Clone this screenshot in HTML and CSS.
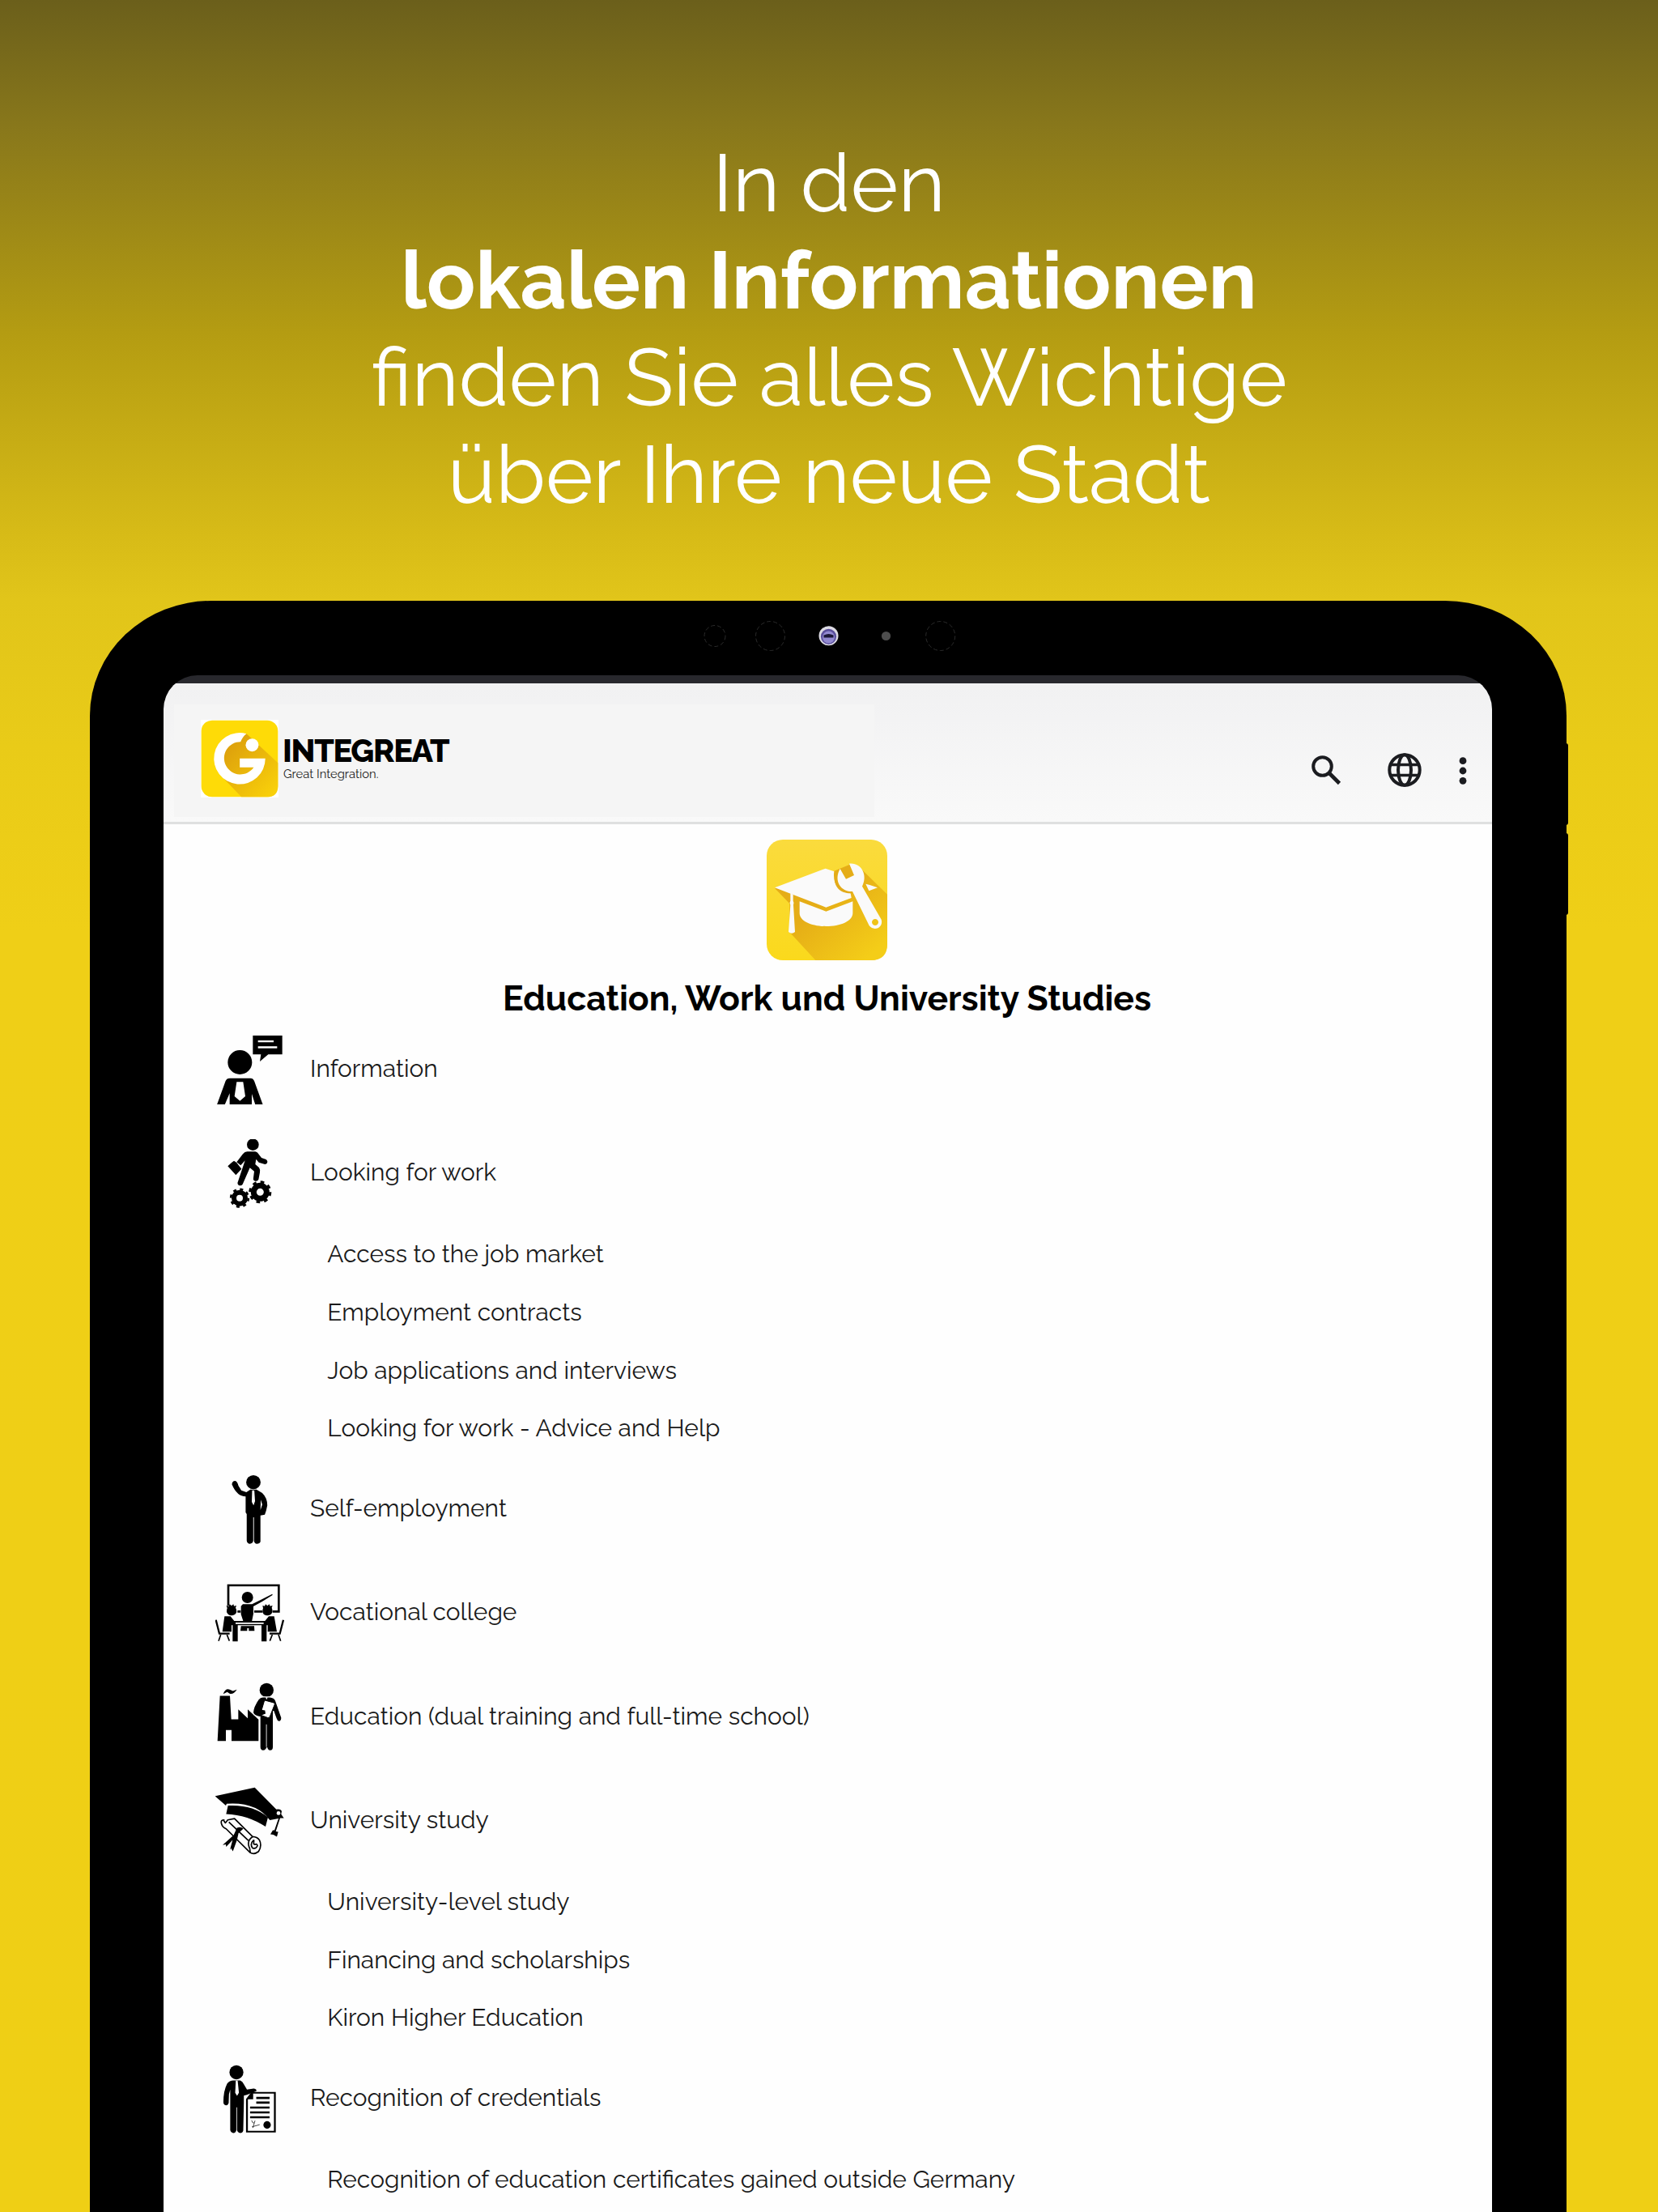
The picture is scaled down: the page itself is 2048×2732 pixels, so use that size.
FILE: index.html
```html
<!DOCTYPE html>
<html lang="de">
<head>
<meta charset="utf-8">
<title>Integreat</title>
<link rel="stylesheet" href="styles.css">
</head>
<body>
<main class="page">
  <h1 class="hero">
    <span class="hero-line">In den</span>
    <strong class="hero-line hero-strong">lokalen Informationen</strong>
    <span class="hero-line">finden Sie alles Wichtige</span>
    <span class="hero-line">über Ihre neue Stadt</span>
  </h1>

  <section class="tablet">
    <svg class="sensors" viewBox="860 760 330 50" fill="none">
      <circle cx="883" cy="785.5" r="13" stroke="#2b2b2b" stroke-dasharray="5 3"/>
      <circle cx="951.5" cy="785.5" r="18" stroke="#2b2b2b" stroke-dasharray="5 3"/>
      <circle cx="1023.5" cy="785.3" r="12" fill="#dddbe4"/>
      <circle cx="1023.5" cy="786.3" r="9.6" fill="#5a4f9c"/>
      <circle cx="1023.5" cy="787" r="7.5" fill="#9289d0"/>
      <path d="M1017.5 787.5v-3q6-3 12 0v3z" fill="#1c1838"/>
      <circle cx="1094.5" cy="785.5" r="5.6" fill="#4d4d4d"/>
      <circle cx="1161.7" cy="785.5" r="18" stroke="#2b2b2b" stroke-dasharray="5 3"/>
    </svg>
    <span class="side-button side-button-up"></span>
    <span class="side-button side-button-down"></span>

    <div class="screen">
      <header class="app-bar">
        <div class="brand">
          <svg class="brand-logo" viewBox="24 27 289 289">
            <defs>
              <linearGradient id="logoShade" x1="0" y1="0" x2="1" y2="1">
                <stop offset="0.2" stop-color="#dea20c"/><stop offset="1" stop-color="#fbd40a"/>
              </linearGradient>
            </defs>
            <path fill="#fff" d="M24 27h289v289H24z"/>
            <rect x="26" y="29" width="285" height="285" rx="40" fill="#fedb07"/>
            <path fill="url(#logoShade)" d="M194 79L311 187V274Q311 314 271 314H175L102 238 90 160 130 100z"/>
            <path fill="#fff" d="M194 79A95.5 95.5 0 1 0 264 171H169V204H221A60.5 60.5 0 1 1 172 109Q180 89 194 79z"/>
            <circle cx="215" cy="121" r="24" fill="#fff"/>
          </svg>
          <div class="brand-text">
            <span class="brand-name">INTEGREAT</span>
            <span class="brand-tag">Great Integration.</span>
          </div>
        </div>
        <nav class="actions">
          <svg class="icon-search" viewBox="0 0 37 37" fill="none" stroke="#1b1c20"><circle cx="13.5" cy="13.5" r="11.3" stroke-width="4"/><path d="M22 22L34.5 34.5" stroke-width="4.6"/></svg>
          <svg class="icon-globe" viewBox="0 0 42 42" fill="none" stroke="#1b1c20" stroke-width="4"><circle cx="21" cy="21" r="18.7"/><ellipse cx="21" cy="21" rx="8" ry="18.7"/><path d="M4 14.500H38M4 27.500H38" stroke-width="3.6"/></svg>
          <svg class="icon-more" viewBox="0 0 10 34" fill="#1b1c20"><circle cx="5" cy="4.7" r="4.4"/><circle cx="5" cy="17" r="4.4"/><circle cx="5" cy="29.3" r="4.4"/></svg>
        </nav>
      </header>

      <div class="content">
        <svg class="category-icon" viewBox="22 20 447 447">
          <defs>
            <linearGradient id="tile" x1="0" y1="0" x2="0" y2="1"><stop offset="0" stop-color="#fadb3d"/><stop offset="1" stop-color="#fad91c"/></linearGradient>
            <linearGradient id="shade" x1="0" y1="0" x2="1" y2="1"><stop offset="0.4" stop-color="#e5ad17"/><stop offset="0.9" stop-color="#f4cd18"/></linearGradient>
          </defs>
          <rect x="22" y="20" width="447" height="447" rx="60" fill="url(#tile)"/>
          <path fill="url(#shade)" d="M52 200L107 257V363L203 467H409Q469 467 469 407V223L374 130 330 112 240 150z"/>
          <path fill="#fafafa" d="M52 198L240 127 272 138C266 180 285 215 333 219L336 236 242 271z"/>
          <path fill="#fafafa" d="M144 249L242 286 341 249V292C341 322 295 341 242 341S144 322 144 292zM389 184L404 188 433 198 401 210z"/>
          <path fill="#fafafa" d="M110 219L120 223V247Q125 255 121 262L127 362Q115 372 103 362L110 262Q105 254 110 247z"/>
          <path fill="#e3ab1a" d="M281 140C265 165 273 222 340 219L338 211C300 213 281 190 281 140z"/>
          <path fill="#fafafa" fill-rule="evenodd" d="M294 128L316 166 346 152 328 109C372 104 398 150 376 193L447 316C456 345 420 362 402 339L340 212C300 215 268 175 294 128zM424 314a12 12 0 1 0 .1 0z"/>
        </svg>
        <h2 class="category-title">Education, Work und University Studies</h2>

        <ul class="menu">
          <li class="item">
            <svg class="item-icon" viewBox="78 58 255 255">
              <circle cx="169" cy="157" r="45"/>
              <path d="M217 57H326V128H274L243 154 247 128H217z"/>
              <path d="M132 216H208Q218 216 222 226L254 314H226L213 274V314H131V272L113 314H84L116 226Q120 216 132 216z"/>
              <path fill="#fff" d="M157 230H181L189 283 169 300 149 283zM236 76h58v7h-58zM236 98h71v7h-71z"/>
            </svg>
            <span class="item-label">Information</span>
          </li>
          <li class="item">
            <svg class="item-icon" viewBox="78 443 255 255">
              <circle cx="217" cy="463" r="22"/>
              <path d="M124 543L138 530 147 523 157 530 175 553 154 576z"/>
              <path d="M196 489H226Q234 490 238 498L249 512 266 518Q275 525 268 534L262 536 239 529 229 517 226 536 240 548Q245 556 243 566L238 592Q234 600 226 598 217 596 219 586L222 562 206 549 179 610Q173 618 164 613 158 608 162 600L188 522 172 540 157 528 180 498Q187 489 196 489z"/>
              <g fill="none" stroke="#000">
                <circle cx="168" cy="661" r="21" stroke-width="18"/>
                <circle cx="168" cy="661" r="32.5" stroke-width="8" stroke-dasharray="12 13.520"/>
                <circle cx="244" cy="639" r="24" stroke-width="21"/>
                <circle cx="244" cy="639" r="37.5" stroke-width="9" stroke-dasharray="14 15.450"/>
              </g>
            </svg>
            <span class="item-label">Looking for work</span>
          </li>
          <li class="subitem">Access to the job market</li>
          <li class="subitem">Employment contracts</li>
          <li class="subitem">Job applications and interviews</li>
          <li class="subitem">Looking for work - Advice and Help</li>
          <li class="item">
            <svg class="item-icon" viewBox="58.2 966 190.4 255" preserveAspectRatio="none">
              <ellipse cx="163.5" cy="992" rx="20" ry="26"/>
              <path d="M104 1000Q105 987 113 987 119 989 122 1005L130 1022 144 1029 155 1019H172L188 1032Q202 1050 202 1078 199 1100 195 1112L183 1115V1212Q181 1220 173 1220 166 1219 165 1208V1122H163V1210Q161 1220 154 1220 146 1219 145 1208V1110L142 1104V1045Q118 1045 104 1000z"/>
              <path fill="#fff" d="M160 1022H166L168 1062 164 1078 159 1065zM184 1057L188 1075 183 1095z"/>
            </svg>
            <span class="item-label">Self-employment</span>
          </li>
          <li class="item">
            <svg class="item-icon" viewBox="78 61 255 255">
              <path fill="none" stroke="#000" stroke-width="8" d="M126 160V85H313V182H290M252 182H222M172 182H160"/>
              <circle cx="197" cy="130" r="21"/>
              <path d="M180 155H214L246 139 289 117 290 121 253 144 219 163V190L213 220H182L173 192V162z"/>
              <path d="M173 236H222L223 254H202V244H196V254H171z"/>
              <path d="M119 160L128 162 131 155 138 161 145 155 147 162 156 160 153 168Q162 184 149 194 137 200 126 193 116 184 122 170zM253 160L261 162 264 155 271 161 278 155 281 162 290 160 287 168Q294 184 282 194 270 200 258 193 249 184 255 170z"/>
              <path d="M112 200H134L148 217H262L276 200H296L306 257H272V233H268V293H249V233H161V293H142V233H138V257H104z"/>
              <path fill="#fff" d="M153 223H257V228H153z"/>
              <path fill="none" stroke="#000" stroke-width="7" d="M80 213L93 264H131M330 213L317 264H279"/>
              <path fill="none" stroke="#000" stroke-width="5" d="M98 268L90 291M121 268L130 291M312 268L320 291M289 268L280 291"/>
            </svg>
            <span class="item-label">Vocational college</span>
          </li>
          <li class="item">
            <svg class="item-icon" viewBox="78 444.6 255 255">
              <path d="M95 494H132L137 581H163V544L198 577V544L238 582V661H138V621H117V661H86z"/>
              <path d="M107 487Q116 465 131 471L143 476 158 471Q145 490 131 486L122 480z"/>
              <circle cx="268" cy="473" r="26"/>
              <path stroke="#fff" stroke-width="4" d="M255 498H280Q297 499 302 512L324 575Q324 589 314 590 306 589 303 578L293 550V684Q293 698 281 698 271 697 269 686 266 698 255 698 243 697 243 684V572Q222 570 217 556 218 535 238 506 245 498 255 498z"/>
              <path fill="#fff" d="M266 600h2.500v84h-2.500zM264 499H272L268 508z"/>
              <path fill="#fff" stroke="#000" stroke-width="3" d="M263 511L296 520Q299 523 297 528L280 571Q277 576 272 575L245 565 249 548 259 514z"/>
              <path d="M222 552Q236 542 262 548L264 560 240 570z"/>
            </svg>
            <span class="item-label">Education (dual training and full-time school)</span>
          </li>
          <li class="item">
            <svg class="item-icon" viewBox="78 50.7 255 255">
              <path d="M77 85L224 53 304 134Q318 130 324 140L322 152 332 166 318 166 302 216 311 217 306 235 293 228 282 226 291 211 297 211 312 168 280 174Q230 105 120 113L117 120z"/>
              <path d="M125 120Q215 115 273 163L264 198Q200 155 118 151z"/>
              <circle cx="312" cy="148" r="7" fill="#fff"/>
              <g fill="none" stroke="#000" stroke-width="5" stroke-linejoin="round">
                <path d="M112 173Q96 172 101 188 104 200 118 206L207 294Q222 303 238 290 252 268 241 247 233 236 216 235L149 168 124 173 115 184 109 175"/>
                <path d="M216 235Q196 248 202 270 208 282 207 294M221 247Q204 262 216 277 228 282 234 269 233 260 226 264L220 262 221 247M128 181L200 249"/>
              </g>
              <path d="M158 202Q172 196 182 205L164 222 158 248 143 289 136 278 132 284 142 247 118 273 117 264 105 266 146 229z"/>
            </svg>
            <span class="item-label">University study</span>
          </li>
          <li class="subitem">University-level study</li>
          <li class="subitem">Financing and scholarships</li>
          <li class="subitem">Kiron Higher Education</li>
          <li class="item">
            <svg class="item-icon" viewBox="68 87.6 222 255" preserveAspectRatio="none">
              <ellipse cx="136" cy="116" rx="22.5" ry="26"/>
              <path d="M126 146H148Q156 149 160 160L170 180 192 176Q203 179 200 186L170 199 160 202V228L158 332Q156 341 148 341 140 340 138 330V246H136V330Q134 341 126 341 118 340 116 330V180L112 197 111 230Q109 238 102 238 94 236 94 226 94 185 106 158 114 146 126 146z"/>
              <path fill="#fff" d="M134 147H140L144 192 138 203 132 192z"/>
              <path fill="#fff" stroke="#000" stroke-width="6" d="M186 192H260V336H170V216z"/>
              <path d="M168 216L190 190V216zM200 207h43v8h-43zM200 224h43v8h-43zM180 243h63v7h-63zM180 261h63v7h-63zM180 279h63v7h-63z"/>
              <ellipse cx="235" cy="311" rx="12" ry="14"/>
              <path fill="none" stroke="#000" stroke-width="2" d="M185 294Q188 306 193 304M196 295L189 322M186 318L211 310"/>
            </svg>
            <span class="item-label">Recognition of credentials</span>
          </li>
          <li class="subitem">Recognition of education certificates gained outside Germany</li>
        </ul>
      </div>
    </div>
  </section>
</main>
</body>
</html>
```
FILE: styles.css
```css
* { box-sizing: border-box; }

body {
  margin: 0;
  font-family: Raleway, Lato, sans-serif;
  color: #1a1a1a;
}

.page {
  width: 2048px;
  height: 2732px;
  overflow: hidden;
  display: flex;
  flex-direction: column;
  background: linear-gradient(#6b5f1b 0, #89781b 160px, #b49c12 410px, #d7bb17 660px, #e1c51a 740px, #e9cb18 920px, #efcf17 1150px, #efcf15 100%);
}

.hero {
  flex: none;
  margin: 0;
  padding-top: 166px;
  height: 741.5px;
  display: flex;
  flex-direction: column;
  align-items: center;
  color: #fff;
  font-size: 99.9px;
  line-height: 120px;
  font-weight: 400;
}
.hero-line { white-space: nowrap; }
.hero-strong { font-weight: 700; font-size: 99.7px; }

.tablet {
  position: relative;
  flex: none;
  width: 1823.5px;
  height: 2100px;
  margin-left: 111px;
  padding: 92.5px 92px 0 91px;
  background: #000;
  border-radius: 150px 150px 0 0 / 142px 142px 0 0;
}
.sensors {
  position: absolute;
  left: 749px;
  top: 18.5px;
  width: 330px;
  height: 50px;
}
.side-button {
  position: absolute;
  right: -2.5px;
  width: 6px;
  height: 101px;
  background: #000;
  border-radius: 0 3px 3px 0;
}
.side-button-up { top: 176px; }
.side-button-down { top: 287px; }

.screen {
  height: 2000px;
  padding-top: 10px;
  overflow: hidden;
  background: #28282d;
  border-radius: 42px 42px 0 0;
}

.app-bar {
  height: 174px;
  padding: 45px 30.5px 0 46px;
  display: flex;
  justify-content: space-between;
  align-items: flex-start;
  background:
    linear-gradient(#f5f5f5, #f5f5f5) 13px 26px / 865px 139px no-repeat,
    linear-gradient(#f1f1f2, #f9f9f9);
  border-bottom: 3px solid #dfe0e0;
}
.brand { display: flex; gap: 5px; }
.brand-logo { width: 96px; height: 96px; }
.brand-text { display: flex; flex-direction: column; padding-top: 15px; white-space: nowrap; }
.brand-name { font-size: 39.5px; line-height: 47px; font-weight: 800; letter-spacing: -1.3px; color: #000; }
.brand-tag { font-size: 14.8px; line-height: 18px; margin-top: -4.5px; padding-left: 1px; color: #222; }

.actions { display: flex; align-items: center; padding-top: 41px; }
.icon-search { width: 37px; height: 37px; margin-right: 57px; }
.icon-globe { width: 42px; height: 42px; margin-right: 46.5px; }
.icon-more { width: 10px; height: 34px; margin-top: 2px; }

.content {
  height: 1900px;
  background: #fefefe;
  padding: 19px 64.5px 0 63px;
  display: flex;
  flex-direction: column;
}
.category-icon { width: 149px; height: 149px; align-self: center; }
.category-title {
  margin: 22px 0 0;
  height: 49px;
  align-self: center;
  font-size: 42.7px;
  line-height: 50px;
  font-weight: 700;
  color: #000;
  white-space: nowrap;
}

.menu { list-style: none; margin: 0; padding: 0 0 0 1px; font-size: 29.9px; line-height: 36px; white-space: nowrap; }
.item { height: 128.3px; display: flex; align-items: center; gap: 32px; }
.item-icon { width: 85px; height: 85px; flex: none; }
.item-label { padding-bottom: 2px; }
.subitem { height: 71.6px; display: flex; align-items: center; padding: 0 0 0 138.3px; }
```
